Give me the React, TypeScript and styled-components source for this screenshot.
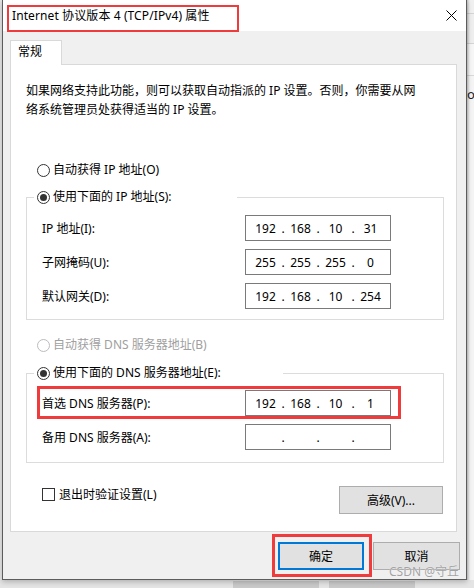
import React from "react";
import styled, { createGlobalStyle } from "styled-components";

/**
 * Internet 协议版本 4 (TCP/IPv4) 属性 dialog, with the red marker boxes
 */

const GlobalStyle = createGlobalStyle`
  html, body {
    margin: 0;
    padding: 0;
  }
  body {
    background: #e6e6e6;
    font-family: "Segoe UI", "Noto Sans", "Noto Sans CJK SC", sans-serif;
    font-size: 12px;
    color: #000;
    overflow: hidden;
  }
`;

const red = "#ef3b3b";

const Screen = styled.div`
  width: 474px;
  height: 588px;
  display: flex;
  flex-direction: column;
  overflow: hidden;
`;

const Desktop = styled.div`
  display: flex;
  padding-left: 2px;
`;

const Window = styled.div`
  position: relative;
  width: 465px;
  height: 580px;
  box-sizing: border-box;
  border: 1px solid #5c5c5c;
  border-top: none;
  background: #f0f0f0;
  display: flex;
  flex-direction: column;
  box-shadow: 0 2px 5px rgba(0, 0, 0, 0.22);
  z-index: 1;
`;

const BehindEdge = styled.div`
  flex: 1;
  height: 580px;
  padding-top: 85px;
  box-sizing: border-box;
  overflow: hidden;
  white-space: nowrap;
  font-size: 13px;
  color: #222;
  background: linear-gradient(to right, rgba(0, 0, 0, 0.18), rgba(0, 0, 0, 0) 3px),
    linear-gradient(
      #f0f0f0 0 13px,
      #d4d4d4 13px 14px,
      #eeeeee 14px 43px,
      #d4d4d4 43px 44px,
      #f6f6f6 44px 75px,
      #d8d8d8 75px 76px,
      #f4f4f4 76px
    );
`;

const Taskbar = styled.div`
  flex: 1;
  display: flex;
  gap: 10px;
  padding: 1px 0 0 233px;
  background: #e4e4e4;
`;

const TaskBlock = styled.div`
  width: 86px;
  background: #c9c9c9;
`;

const TitleBar = styled.div`
  height: 31px;
  flex-shrink: 0;
  background: #fff;
  display: flex;
  justify-content: space-between;
  padding: 0 9px;
`;

const Title = styled.div`
  position: relative;
  line-height: 31px;
  letter-spacing: 0.1px;
  z-index: 2;
  &::after {
    content: "";
    position: absolute;
    left: -5px;
    width: 232px;
    top: 5px;
    bottom: -1px;
    box-sizing: border-box;
    border: 2px solid ${red};
  }
`;

const CloseButton = styled.button`
  background: none;
  border: 0;
  padding: 0;
  display: flex;
  align-items: center;
`;

const Body = styled.div`
  flex: 1;
  display: flex;
  flex-direction: column;
  padding: 9px 0 0 7px;
`;

const TabStrip = styled.div`
  display: flex;
`;

const Tab = styled.div`
  width: 52px;
  height: 25px;
  box-sizing: border-box;
  border: 1px solid #d9d9d9;
  border-bottom: none;
  background: #fff;
  padding-left: 7px;
  line-height: 22px;
  margin-bottom: -1px;
  position: relative;
  z-index: 1;
`;

const Panel = styled.div`
  width: 447px;
  height: 468px;
  box-sizing: border-box;
  border: 1px solid #d9d9d9;
  background: #fff;
  display: flex;
  flex-direction: column;
`;

const Description = styled.p`
  margin: 0;
  padding: 16px 0 0 15px;
  line-height: 19px;
`;

const OptionRow = styled.div<{ $disabled?: boolean }>`
  display: flex;
  align-items: center;
  gap: 3px;
  height: 16px;
  line-height: 16px;
  white-space: nowrap;
  color: ${(p) => (p.$disabled ? "#a0a0a0" : "#000")};
`;

const LooseOption = styled(OptionRow)<{ $top: number }>`
  margin: ${(p) => p.$top}px 0 0 26px;
`;

const Radio = styled.span<{ $checked?: boolean; $disabled?: boolean }>`
  width: 13px;
  height: 13px;
  box-sizing: border-box;
  border-radius: 50%;
  border: 1px solid ${(p) => (p.$disabled ? "#bcbcbc" : "#333")};
  background: #fff;
  display: flex;
  align-items: center;
  justify-content: center;
  flex-shrink: 0;
  &::after {
    content: "";
    width: 7px;
    height: 7px;
    border-radius: 50%;
    background: ${(p) => (p.$checked ? "#333" : "transparent")};
  }
`;

const Group = styled.fieldset<{ $top: number; $padTop: number; $padBottom: number }>`
  margin: ${(p) => p.$top}px 12px 0 15px;
  padding: ${(p) => p.$padTop}px 0 ${(p) => p.$padBottom}px 15px;
  border: 1px solid #dcdcdc;
  min-width: 0;
`;

const GroupLegend = styled.legend<{ $width: number }>`
  width: ${(p) => p.$width}px;
  box-sizing: border-box;
  padding: 0 0 0 3px;
  margin-left: -8px;
`;

const FieldRow = styled.div<{ $marked?: boolean }>`
  position: relative;
  width: max-content;
  display: flex;
  align-items: center;
  & + & {
    margin-top: 8px;
  }
  &::after {
    content: "";
    display: ${(p) => (p.$marked ? "block" : "none")};
    position: absolute;
    left: -5px;
    right: -10px;
    top: -4px;
    bottom: -3px;
    border: 3px solid ${red};
  }
`;

const FieldLabel = styled.span`
  width: 203px;
`;

const IpBox = styled.div`
  width: 146px;
  height: 26px;
  box-sizing: border-box;
  border: 1px solid #7a7a7a;
  background: #fff;
  display: flex;
  align-items: center;
  padding-left: 6px;
`;

const Octet = styled.span`
  width: 27px;
  text-align: center;
`;

const Dot = styled.span`
  width: 8px;
  text-align: center;
`;

const OptionsBar = styled.div`
  display: flex;
  justify-content: space-between;
  align-items: flex-start;
  margin: 23px 13px 0 31px;
`;

const CheckLabel = styled.div`
  display: flex;
  align-items: center;
  gap: 4px;
  height: 16px;
`;

const CheckBox = styled.span`
  width: 13px;
  height: 13px;
  box-sizing: border-box;
  border: 1px solid #333;
  background: #fff;
`;

const PushButton = styled.button<{ $width: number; $default?: boolean; $marked?: boolean }>`
  position: relative;
  width: ${(p) => p.$width}px;
  height: 28px;
  box-sizing: border-box;
  padding: 0;
  font: inherit;
  color: #000;
  background: #e1e1e1;
  border: ${(p) => (p.$default ? "2px solid #0078d7" : "1px solid #adadad")};
  &::after {
    content: "";
    display: ${(p) => (p.$marked ? "block" : "none")};
    position: absolute;
    left: -8px;
    right: -10px;
    top: -10px;
    bottom: -9px;
    border: 3px solid ${red};
  }
`;

const Footer = styled.div`
  display: flex;
  justify-content: flex-end;
  gap: 9px;
  padding: 10px 6px 0 0;
`;

const Watermark = styled.span`
  position: absolute;
  right: 7px;
  bottom: 0;
  line-height: 14px;
  color: #a3a3a3;
  text-shadow: 0 0 1px #fff;
  z-index: 3;
`;

interface IpProps {
  octets: string[];
}

const IpField: React.FC<IpProps> = ({ octets }) => (
  <IpBox>
    {octets.map((o, i) => (
      <React.Fragment key={i}>
        {i > 0 && <Dot>.</Dot>}
        <Octet>{o}</Octet>
      </React.Fragment>
    ))}
  </IpBox>
);

const CloseIcon = () => (
  <svg width="11" height="11" viewBox="0 0 11 11">
    <path d="M0.5 0.5 L10.5 10.5 M10.5 0.5 L0.5 10.5" stroke="#000" strokeWidth="1" fill="none" />
  </svg>
);

export default function App() {
  return (
    <>
      <GlobalStyle />
      <Screen>
        <Desktop>
          <Window>
            <TitleBar>
              <Title>Internet 协议版本 4 (TCP/IPv4) 属性</Title>
              <CloseButton aria-label="关闭">
                <CloseIcon />
              </CloseButton>
            </TitleBar>

            <Body>
              <TabStrip>
                <Tab>常规</Tab>
              </TabStrip>

              <Panel>
                <Description>
                  如果网络支持此功能，则可以获取自动指派的 IP 设置。否则，你需要从网
                  <br />
                  络系统管理员处获得适当的 IP 设置。
                </Description>

                <LooseOption $top={43}>
                  <Radio />
                  自动获得 IP 地址(O)
                </LooseOption>

                <Group $top={11} $padTop={10} $padBottom={10}>
                  <GroupLegend $width={203}>
                    <OptionRow>
                      <Radio $checked />
                      使用下面的 IP 地址(S):
                    </OptionRow>
                  </GroupLegend>
                  <FieldRow>
                    <FieldLabel>IP 地址(I):</FieldLabel>
                    <IpField octets={["192", "168", "10", "31"]} />
                  </FieldRow>
                  <FieldRow>
                    <FieldLabel>子网掩码(U):</FieldLabel>
                    <IpField octets={["255", "255", "255", "0"]} />
                  </FieldRow>
                  <FieldRow>
                    <FieldLabel>默认网关(D):</FieldLabel>
                    <IpField octets={["192", "168", "10", "254"]} />
                  </FieldRow>
                </Group>

                <LooseOption $top={17} $disabled>
                  <Radio $disabled />
                  自动获得 DNS 服务器地址(B)
                </LooseOption>

                <Group $top={12} $padTop={9} $padBottom={12}>
                  <GroupLegend $width={249}>
                    <OptionRow>
                      <Radio $checked />
                      使用下面的 DNS 服务器地址(E):
                    </OptionRow>
                  </GroupLegend>
                  <FieldRow $marked>
                    <FieldLabel>首选 DNS 服务器(P):</FieldLabel>
                    <IpField octets={["192", "168", "10", "1"]} />
                  </FieldRow>
                  <FieldRow>
                    <FieldLabel>备用 DNS 服务器(A):</FieldLabel>
                    <IpField octets={["", "", "", ""]} />
                  </FieldRow>
                </Group>

                <OptionsBar>
                  <CheckLabel>
                    <CheckBox />
                    退出时验证设置(L)
                  </CheckLabel>
                  <PushButton $width={104}>高级(V)...</PushButton>
                </OptionsBar>
              </Panel>

              <Footer>
                <PushButton $width={86} $default $marked>
                  确定
                </PushButton>
                <PushButton $width={87}>取消</PushButton>
              </Footer>
            </Body>

            <Watermark>CSDN @守丘</Watermark>
          </Window>
          <BehindEdge>or</BehindEdge>
        </Desktop>
        <Taskbar>
          <TaskBlock />
          <TaskBlock />
        </Taskbar>
      </Screen>
    </>
  );
}
